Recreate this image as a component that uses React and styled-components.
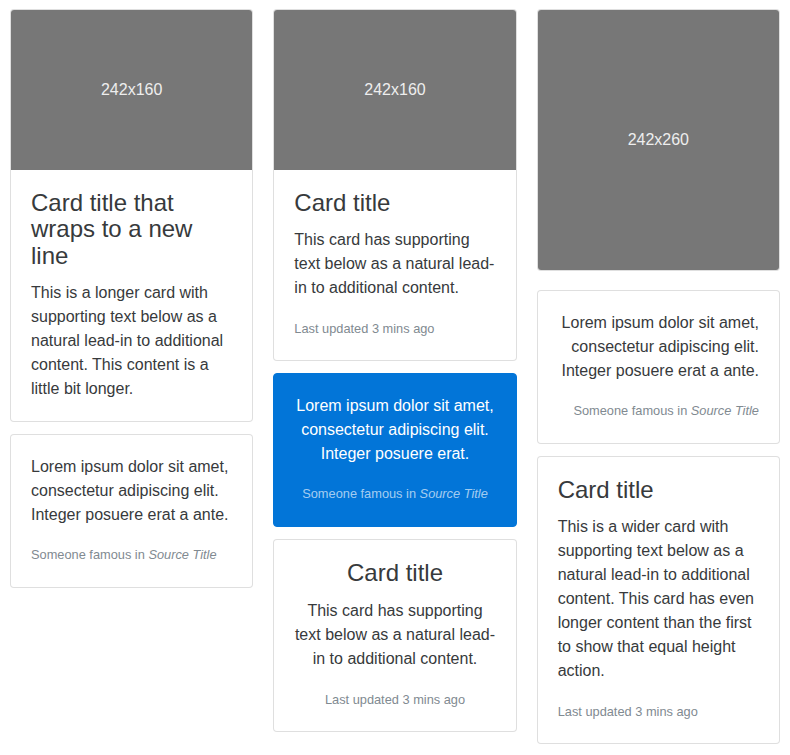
import styled, { createGlobalStyle } from "styled-components";

const GlobalStyle = createGlobalStyle`
  body {
    margin: 0;
    background: #fff;
    font-family: "Liberation Sans", Arial, sans-serif;
    font-size: 16px;
    line-height: 1.5;
    color: #373a3c;
  }
`;

const Page = styled.div`
  padding: 9px 10px 10px;
  display: grid;
  grid-template-columns: repeat(3, 1fr);
  column-gap: 20px;
  align-items: start;
`;

const Column = styled.div`
  display: flex;
  flex-direction: column;
`;

const Card = styled.div`
  background: ${(p) => (p.$primary ? "#0275d8" : "#fff")};
  border: 1px solid ${(p) => (p.$primary ? "#0275d8" : "rgba(0, 0, 0, 0.125)")};
  border-radius: 4px;
  overflow: hidden;
  margin-bottom: ${(p) => (p.$gap ? p.$gap : 12)}px;
  color: ${(p) => (p.$primary ? "#fff" : "inherit")};
  text-align: ${(p) => p.$align || "left"};
`;

const Placeholder = styled.div`
  height: ${(p) => p.$h}px;
  background: #777;
  color: #eee;
  display: flex;
  align-items: center;
  justify-content: center;
  font-size: 16px;
`;

const Body = styled.div`
  padding: 20px;
`;

const Title = styled.h4`
  margin: 0 0 12px;
  font-size: 24px;
  font-weight: 500;
  line-height: 1.1;
`;

const Text = styled.p`
  margin: 0 0 16px;
  &:last-child {
    margin-bottom: 0;
  }
`;

const Muted = styled.small`
  font-size: 80%;
  color: #818a91;
`;

const Quote = styled.blockquote`
  margin: 0;
  padding: 0;
`;

const Footer = styled.footer`
  font-size: 80%;
  line-height: 24px;
  color: ${(p) => (p.$light ? "rgba(255, 255, 255, 0.65)" : "#818a91")};
`;

const Updated = () => (
  <Text>
    <Muted>Last updated 3 mins ago</Muted>
  </Text>
);

const QuoteCard = ({ text, primary, align }) => (
  <Card $primary={primary} $align={align}>
    <Body>
      <Quote>
        <Text>{text}</Text>
        <Footer $light={primary}>
          Someone famous in <cite title="Source Title">Source Title</cite>
        </Footer>
      </Quote>
    </Body>
  </Card>
);

export default function App() {
  return (
    <>
      <GlobalStyle />
      <Page>
        <Column>
          <Card>
            <Placeholder $h={160}>242x160</Placeholder>
            <Body>
              <Title>Card title that wraps to a new line</Title>
              <Text>
                This is a longer card with supporting text below as a natural
                lead-in to additional content. This content is a little bit
                longer.
              </Text>
            </Body>
          </Card>
          <QuoteCard text="Lorem ipsum dolor sit amet, consectetur adipiscing elit. Integer posuere erat a ante." />
        </Column>

        <Column>
          <Card>
            <Placeholder $h={160}>242x160</Placeholder>
            <Body>
              <Title>Card title</Title>
              <Text>
                This card has supporting text below as a natural lead-in to
                additional content.
              </Text>
              <Updated />
            </Body>
          </Card>
          <QuoteCard
            primary
            align="center"
            text="Lorem ipsum dolor sit amet, consectetur adipiscing elit. Integer posuere erat."
          />
          <Card $align="center">
            <Body>
              <Title>Card title</Title>
              <Text>
                This card has supporting text below as a natural lead-in to
                additional content.
              </Text>
              <Updated />
            </Body>
          </Card>
        </Column>

        <Column>
          <Card $gap={19}>
            <Placeholder $h={260}>242x260</Placeholder>
          </Card>
          <QuoteCard
            align="right"
            text="Lorem ipsum dolor sit amet, consectetur adipiscing elit. Integer posuere erat a ante."
          />
          <Card>
            <Body>
              <Title>Card title</Title>
              <Text>
                This is a wider card with supporting text below as a natural
                lead-in to additional content. This card has even longer
                content than the first to show that equal height action.
              </Text>
              <Updated />
            </Body>
          </Card>
        </Column>
      </Page>
    </>
  );
}
